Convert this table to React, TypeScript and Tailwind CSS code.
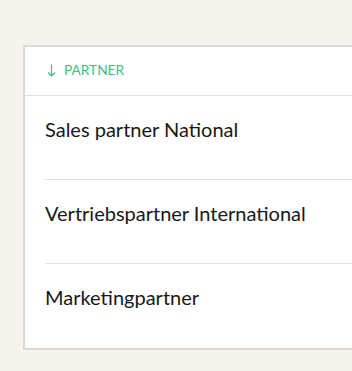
import { FC, ReactElement } from 'react';

const partners = [
  'Sales partner National',
  'Vertriebspartner International',
  'Marketingpartner',
];

const App: FC = (): ReactElement => {
  return (
    <div className="min-h-[371px] bg-[#f6f3ef] pt-[45px] pl-[23px] font-['Lato',sans-serif]">
      <div className="w-[340px] border-2 border-r-0 border-[#dcd9d5] bg-white">
        <div className="flex h-[49px] items-center gap-[8px] border-b border-[#e3e1de] pl-[22px] pb-[1px] text-[13.7px] text-[#3cbf83]">
          <svg width="9" height="13" viewBox="0 0 9 13" fill="none" stroke="#3cbf83" strokeWidth="1.2">
            <path d="M4.5 0.5V12M1 8.5L4.5 12L8 8.5" />
          </svg>
          <span>PARTNER</span>
        </div>
        {partners.map((name, i) => (
          <div key={name} className="pl-[20px]">
            <div
              className={`h-[84px] pt-[19px] text-[20px] leading-[29px] text-[#181818] ${
                i < partners.length - 1 ? 'border-b border-[#e3e1de]' : ''
              }`}
            >
              {name}
            </div>
          </div>
        ))}
      </div>
    </div>
  );
};

export default App;
